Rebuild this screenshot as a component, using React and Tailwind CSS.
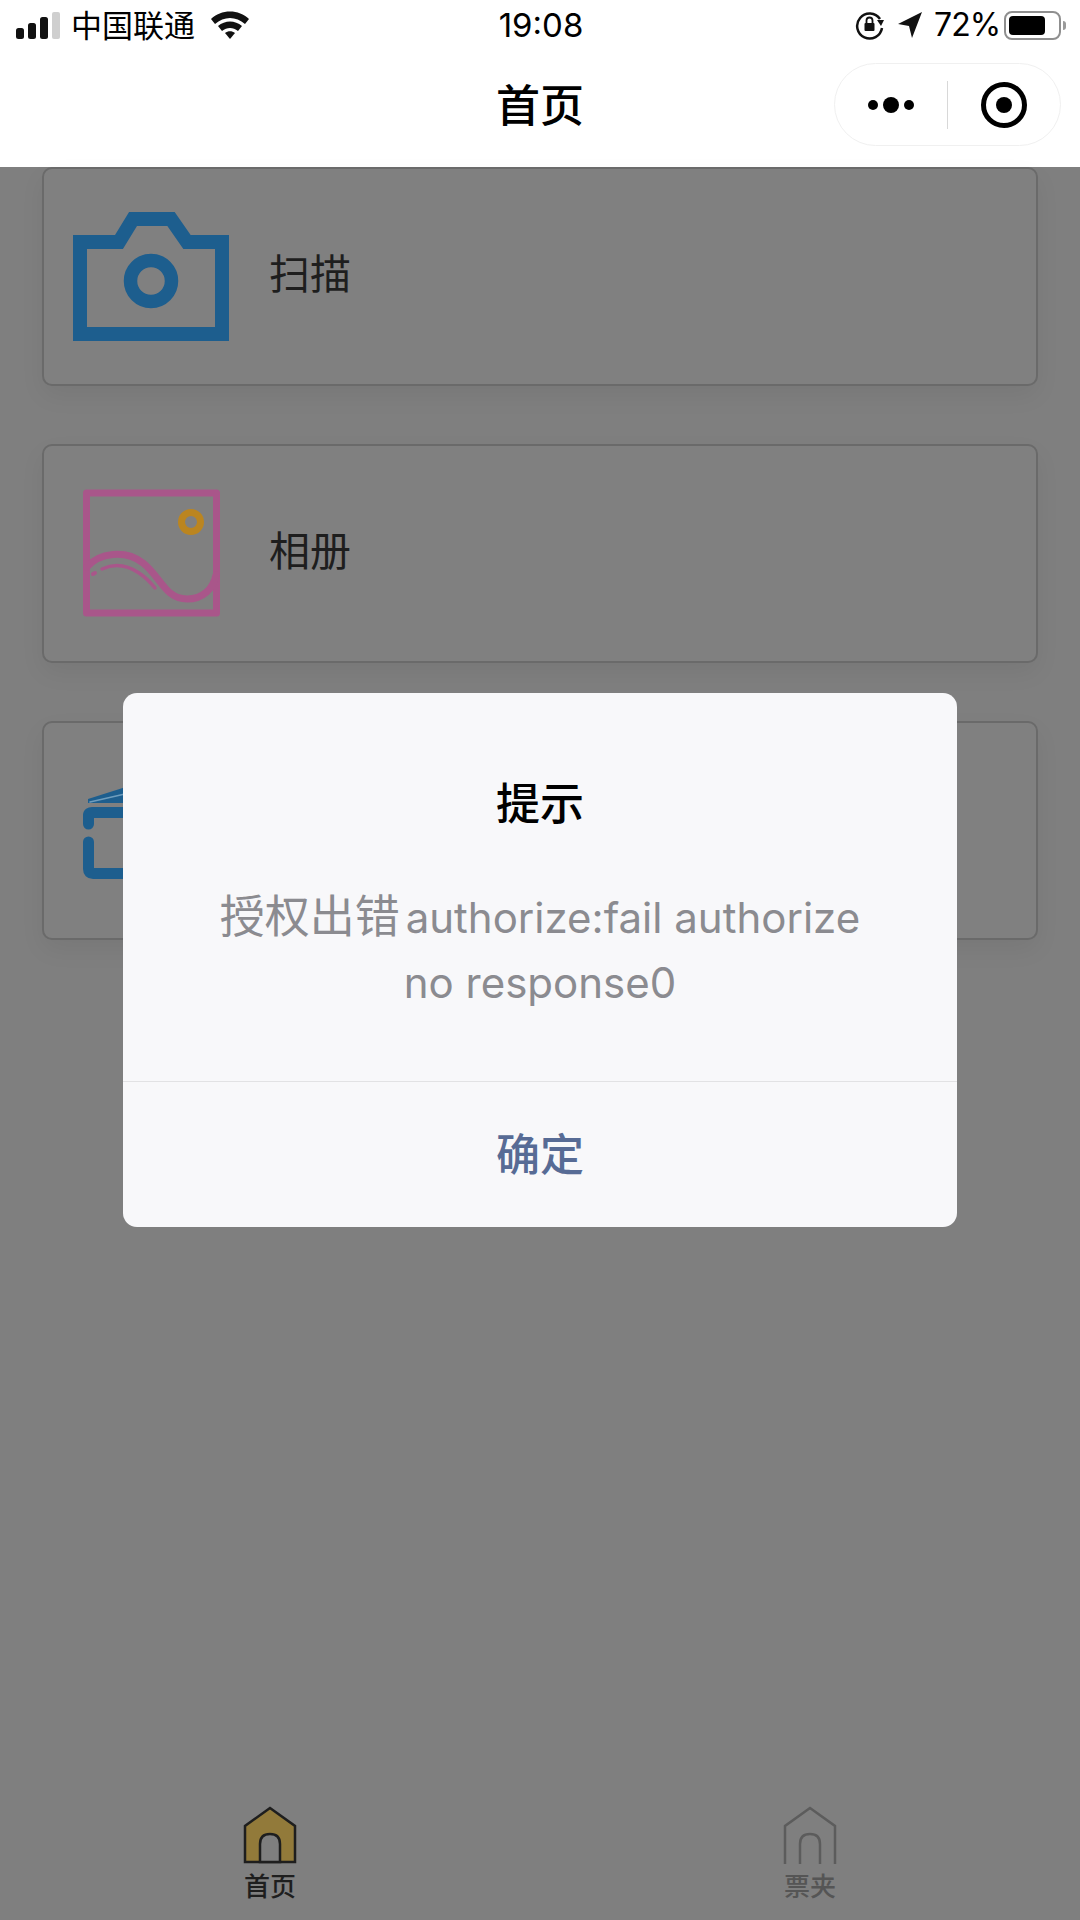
import React from 'react';

const FONT = "font-['Inter','Noto_Sans_CJK_SC',sans-serif]";

/* ---------- status bar ---------- */
const StatusBar = () => (
  <div className="h-[52px] flex items-center justify-between pl-[16px] pr-[14px] pb-[2px] text-black">
    <div className="flex items-center flex-1">
      <svg width="44" height="28" viewBox="0 0 44 28" className="mr-[11px]">
        <rect x="0" y="17" width="8" height="11" rx="2.500" fill="#111" />
        <rect x="12" y="12" width="8" height="16" rx="2.500" fill="#111" />
        <rect x="24" y="6" width="8" height="22" rx="2.500" fill="#111" />
        <rect x="36" y="1" width="8" height="27" rx="2" fill="#cfcfcf" />
      </svg>
      <span className="text-[31px] leading-none w-[124px] whitespace-nowrap">中国联通</span>
      <svg width="40" height="30" viewBox="0 0 40 30" className="ml-[15px] mb-[3px]">
        <path d="M1 10 C11 0 29 0 39 10 L35 15 C26 7 14 7 5 15 Z" fill="#111" />
        <path d="M8 17 C15 11 25 11 32 17 L28 22 C23 18 17 18 12 22 Z" fill="#111" />
        <path d="M15 24 C18 21.500 22 21.500 25 24 L20 30 Z" fill="#111" />
      </svg>
    </div>
    <span className="text-[33px] leading-none">19:08</span>
    <div className="flex items-center justify-end flex-1">
      <svg width="30" height="30" viewBox="0 0 30 30" fill="none" className="mr-[13px]">
        <path d="M25 9 A12.500 12.500 0 1 0 27 18" stroke="#111" strokeWidth="2.500" />
        <path d="M22 10 L29 10 L26 16 Z" fill="#111" />
        <rect x="9.500" y="13" width="10" height="8" rx="1" fill="#111" />
        <path d="M11.500 13 V10.500 a3 3 0 0 1 6 0 V13" stroke="#111" strokeWidth="1.800" />
      </svg>
      <svg width="24" height="26" viewBox="0 0 24 26" className="mr-[12px]">
        <path d="M24 0 L14 26 L11 14 L0 12 Z" fill="#111" />
      </svg>
      <span className="text-[32px] leading-none tracking-[-1px] w-[62px] whitespace-nowrap">72%</span>
      <div className="ml-[8px] w-[57px] h-[29px] rounded-[8px] border-2 border-[#8f8f8f] p-[3px] pr-[14px]">
        <div className="w-full h-full rounded-[4px] bg-black" />
      </div>
      <div className="ml-[2px] w-[3px] h-[9px] rounded-r-full bg-[#9a9a9a]" />
    </div>
  </div>
);

/* ---------- nav bar ---------- */
const NavBar = () => (
  <div className="relative flex-1 flex items-center justify-center pb-[8px]">
    <span className="text-[44px] font-medium leading-none text-black">首页</span>
    <div className="absolute right-[19px] top-[11px] w-[227px] h-[83px] rounded-full border border-[#f0f0f0] bg-white flex items-center">
      <div className="flex-1 flex items-center justify-center gap-[5px]">
        <div className="w-[10px] h-[10px] rounded-full bg-black" />
        <div className="w-[16px] h-[16px] rounded-full bg-black" />
        <div className="w-[10px] h-[10px] rounded-full bg-black" />
      </div>
      <div className="w-px h-[48px] bg-[#d8d8d8]" />
      <div className="flex-1 flex items-center justify-center">
        <div className="w-[46px] h-[46px] rounded-full border-[5px] border-black flex items-center justify-center">
          <div className="w-[16px] h-[16px] rounded-full bg-black" />
        </div>
      </div>
    </div>
  </div>
);

/* ---------- card icons ---------- */
const CameraIcon = () => (
  <svg width="156" height="129" viewBox="0 0 156 129" fill="none">
    <path d="M7 122 V30 H46 L60 7 H98 L114 30 H149 V122 Z" stroke="#1d5e8e" strokeWidth="14" />
    <circle cx="78" cy="69" r="20.500" stroke="#1d5e8e" strokeWidth="13.500" />
  </svg>
);

const PhotoIcon = () => (
  <svg width="156" height="129" viewBox="0 0 156 129" fill="none" strokeLinecap="round">
    <rect x="13.500" y="4" width="130" height="120" stroke="#a9568a" strokeWidth="7" strokeLinejoin="round" />
    <circle cx="118" cy="33" r="9.500" stroke="#bb8520" strokeWidth="7" />
    <path d="M14 78 C26 64 52 60 70 74 C88 88 92 110 114 110 C130 110 140 100 143 86" stroke="#a9568a" strokeWidth="7" />
    <path d="M20 85 L22 84" stroke="#a9568a" strokeWidth="4" />
    <path d="M29 80 C42 74 54 76 66 84 C72 88 78 94 82 99" stroke="#a9568a" strokeWidth="3.500" />
  </svg>
);

const ScanIcon = () => (
  <svg width="156" height="129" viewBox="0 0 156 129" fill="none" strokeLinecap="round">
    <path d="M15 33 L78 13 L141 33 V37 H15 Z" fill="#1d5e8e" />
    <path d="M17 36 L78 22" stroke="#6f9dbd" strokeWidth="1.500" />
    <path d="M15.500 58 V49 Q15.500 46.500 19 46.500 H137 Q140.500 46.500 140.500 49 V58" stroke="#1d5e8e" strokeWidth="11" />
    <path d="M15.500 76 V103 Q15.500 107.500 20 107.500 H136 Q140.500 107.500 140.500 103 V76" stroke="#1d5e8e" strokeWidth="11" />
  </svg>
);

const MENU = [
  { label: '扫描', icon: <CameraIcon /> },
  { label: '相册', icon: <PhotoIcon /> },
  { label: '票夹', icon: <ScanIcon /> },
];

const MenuCard = ({ label, icon }) => (
  <div className="h-[219px] rounded-[10px] border-2 border-[#6a6a6a] bg-[#808080] shadow-[0_10px_24px_rgba(0,0,0,0.06)] flex items-center pl-[29px]">
    <div className="w-[156px] flex justify-center">{icon}</div>
    <span className="ml-[40px] mb-[4px] text-[41px] leading-none text-[#1e1e1e]">{label}</span>
  </div>
);

/* ---------- tab bar ---------- */
const HomeIcon = ({ active }) => (
  <svg width="54" height="58" viewBox="0 0 54 58" fill="none">
    {active ? (
      <>
        <path d="M2 56 V20 L27 2 L52 20 V56 Z" fill="#927a3a" stroke="#1e1e1e" strokeWidth="2.500" />
        <path d="M17 56 V38 Q17 28 27 28 Q37 28 37 38 V56 Z" fill="#7f7f7f" stroke="#1e1e1e" strokeWidth="2.500" />
      </>
    ) : (
      <path d="M2 58 V20 L27 2 L52 20 V58 M17 58 V38 Q17 28 27 28 Q37 28 37 38 V58" stroke="#5c5c5c" strokeWidth="2.500" />
    )}
  </svg>
);

const TabItem = ({ label, active }) => (
  <div className="flex flex-col items-center">
    <HomeIcon active={active} />
    <span className={`mt-[10px] text-[26px] leading-none font-medium ${active ? 'text-[#1e1e1e]' : 'text-[#555555]'}`}>{label}</span>
  </div>
);

/* ---------- modal ---------- */
const Modal = () => (
  <div className="absolute left-[123px] top-[693px] w-[834px] h-[534px] rounded-[14px] bg-[#f8f8fa] flex flex-col">
    <div className="flex-1 flex flex-col items-center pt-[88px] border-b border-[#e2e2e4]">
      <h2 className="text-[44px] leading-[46px] font-medium text-black">提示</h2>
      <p className="mt-[57px] text-center text-[42px] leading-[65px] text-[#8b8b90]">
        <span className="text-[45px] mr-[-6px]">授权出错</span> authorize:fail authorize<br />no response0
      </p>
    </div>
    <div className="h-[145px] flex items-center justify-center text-[44px] font-medium text-[#576b95]">确定</div>
  </div>
);

export default function App() {
  return (
    <div className={`relative h-[1920px] overflow-hidden bg-[#7f7f7f] flex flex-col ${FONT}`}>
      <header className="h-[167px] bg-white flex flex-col">
        <StatusBar />
        <NavBar />
      </header>

      <main className="px-[42px] flex flex-col gap-[58px]">
        {MENU.map((item) => (
          <MenuCard key={item.label} {...item} />
        ))}
      </main>

      <footer className="mt-auto h-[114px] grid grid-cols-2 justify-items-center">
        <TabItem label="首页" active />
        <TabItem label="票夹" />
      </footer>

      <Modal />
    </div>
  );
}
